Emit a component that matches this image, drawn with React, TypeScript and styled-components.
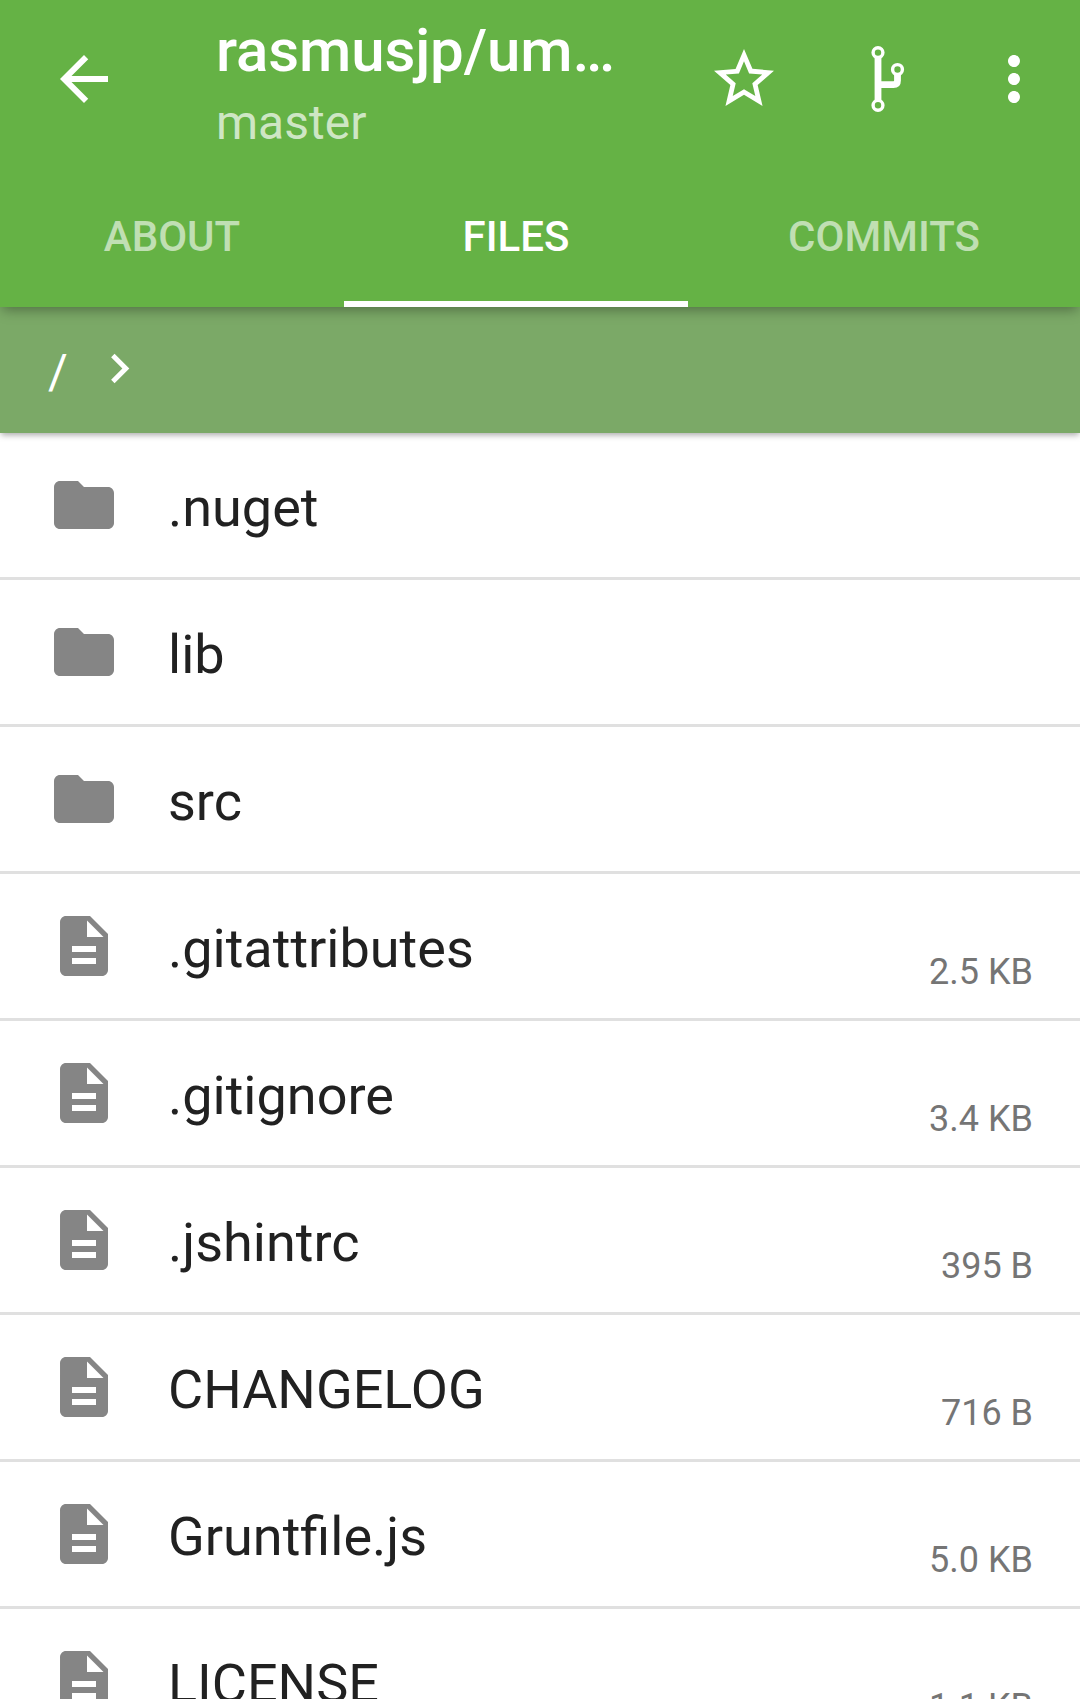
import React from 'react';
import styled, { createGlobalStyle } from 'styled-components';

const GlobalStyle = createGlobalStyle`
  *, *::before, *::after { box-sizing: border-box; }
  html, body { margin: 0; padding: 0; }
  body {
    background: #fff;
    color: #212121;
    font-family: Roboto, 'Noto Sans', sans-serif;
    overflow: hidden;
  }
  button { border: 0; padding: 0; background: none; font: inherit; color: inherit; }
`;

const Screen = styled.div`
  display: flex;
  flex-direction: column;
  width: 1080px;
  height: 1699px;
  overflow: hidden;
  background: #fff;
`;

const AppBar = styled.header`
  position: relative;
  z-index: 2;
  flex: none;
  height: 307px;
  display: flex;
  flex-direction: column;
  background: #65b245;
  color: #fff;
  box-shadow: 0 5px 12px -2px rgba(0, 0, 0, 0.34);
`;

const Toolbar = styled.div`
  display: flex;
  align-items: flex-start;
  height: 163px;
  padding: 0 30px 0 48px;
`;

const IconButton = styled.button<{ $gap?: number }>`
  flex: none;
  width: 72px;
  height: 72px;
  margin-top: 43px;
  margin-left: ${(p) => p.$gap ?? 0}px;
  svg { display: block; }
`;

const Titles = styled.div`
  flex: 1;
  min-width: 0;
  margin-left: 96px;
  padding-top: 15px;
  white-space: nowrap;
`;

const Title = styled.h1`
  margin: 0;
  font-size: 60px;
  line-height: 71px;
  font-weight: 500;
  letter-spacing: -0.12px;
`;

const Subtitle = styled.div`
  margin-top: 8px;
  font-size: 48px;
  line-height: 57px;
  color: rgba(255, 255, 255, 0.7);
`;

const Tabs = styled.nav`
  display: grid;
  grid-template-columns: 344px 344px 392px;
  height: 144px;
`;

const Tab = styled.button<{ $active?: boolean }>`
  padding-top: 3px;
  font-size: 42px;
  font-weight: 500;
  line-height: 49px;
  text-align: center;
  color: ${(p) => (p.$active ? '#fff' : 'rgba(255, 255, 255, 0.6)')};
  box-shadow: ${(p) => (p.$active ? 'inset 0 -6px 0 #fff' : 'none')};
`;

const Breadcrumbs = styled.div`
  position: relative;
  z-index: 1;
  flex: none;
  display: flex;
  align-items: center;
  height: 126px;
  padding-left: 48px;
  background: #7ba967;
  color: #fff;
  font-size: 48px;
  line-height: 57px;
  box-shadow: 0 3px 6px -1px rgba(0, 0, 0, 0.34);
`;

const Crumb = styled.span`
  width: 41.5px;
  padding-top: 3px;
`;

const ChevronSvg = styled.svg`
  display: block;
  margin-top: -3px;
`;

const List = styled.ul`
  margin: 0;
  padding: 0;
  list-style: none;
`;

const Row = styled.li`
  display: flex;
  align-items: center;
  height: 147px;
  padding: 0 47px 0 48px;
  border-bottom: 3px solid #e0e0e0;
`;

const RowIcon = styled.svg`
  flex: none;
  fill: #858585;
`;

const FileName = styled.span`
  flex: 1;
  margin-left: 48px;
  padding-top: 5px;
  font-size: 54px;
  line-height: 63px;
`;

const FileSize = styled.span`
  align-self: flex-end;
  margin-bottom: 25px;
  font-size: 36px;
  line-height: 42px;
  color: #757575;
`;

const FOLDER = 'M10 4H4c-1.1 0-1.99.9-1.99 2L2 18c0 1.1.9 2 2 2h16c1.1 0 2-.9 2-2V8c0-1.1-.9-2-2-2h-8l-2-2z';
const DOCUMENT = 'M14 2H6c-1.1 0-1.99.9-1.99 2L4 20c0 1.1.89 2 1.99 2H18c1.1 0 2-.9 2-2V8l-6-6zm2 16H8v-2h8v2zm0-4H8v-2h8v2zm-3-5V3.5L18.5 9H13z';

type Entry = { name: string; size?: string };

const entries: Entry[] = [
  { name: '.nuget' },
  { name: 'lib' },
  { name: 'src' },
  { name: '.gitattributes', size: '2.5 KB' },
  { name: '.gitignore', size: '3.4 KB' },
  { name: '.jshintrc', size: '395 B' },
  { name: 'CHANGELOG', size: '716 B' },
  { name: 'Gruntfile.js', size: '5.0 KB' },
  { name: 'LICENSE', size: '1.1 KB' },
];

const Glyph = ({ d }: { d: string }) => (
  <svg width="72" height="72" viewBox="0 0 24 24" fill="#fff">
    <path d={d} />
  </svg>
);

const BranchGlyph = () => (
  <svg width="72" height="72" viewBox="0 0 72 72" fill="none" stroke="#fff">
    <path d="M26 15V57M26 41.7H41.5Q45.5 41.7 45.5 37.5V32" strokeWidth="6.8" />
    <g strokeWidth="3.4" fill="#65b245">
      <circle cx="26" cy="9.6" r="4.9" />
      <circle cx="26" cy="62.3" r="4.9" />
      <circle cx="45.5" cy="26.5" r="4.9" />
    </g>
  </svg>
);

export default function App() {
  return (
    <>
      <GlobalStyle />
      <Screen>
        <AppBar>
          <Toolbar>
            <IconButton aria-label="Back">
              <Glyph d="M20 11H7.83l5.59-5.59L12 4l-8 8 8 8 1.41-1.41L7.83 13H20v-2z" />
            </IconButton>
            <Titles>
              <Title>rasmusjp/um…</Title>
              <Subtitle>master</Subtitle>
            </Titles>
            <IconButton aria-label="Star">
              <Glyph d="M22 9.24l-7.19-.62L12 2 9.19 8.63 2 9.24l5.46 4.73L5.82 21 12 17.27 18.18 21l-1.63-7.03L22 9.24zM12 15.4l-3.76 2.27 1-4.28-3.32-2.88 4.38-.38L12 6.1l1.71 4.04 4.38.38-3.32 2.88 1 4.28L12 15.4z" />
            </IconButton>
            <IconButton aria-label="Branch" $gap={72}>
              <BranchGlyph />
            </IconButton>
            <IconButton aria-label="More" $gap={54}>
              <Glyph d="M12 8c1.1 0 2-.9 2-2s-.9-2-2-2-2 .9-2 2 .9 2 2 2zm0 2c-1.1 0-2 .9-2 2s.9 2 2 2 2-.9 2-2-.9-2-2-2zm0 6c-1.1 0-2 .9-2 2s.9 2 2 2 2-.9 2-2-.9-2-2-2z" />
            </IconButton>
          </Toolbar>
          <Tabs>
            <Tab>ABOUT</Tab>
            <Tab $active>FILES</Tab>
            <Tab>COMMITS</Tab>
          </Tabs>
        </AppBar>
        <Breadcrumbs>
          <Crumb>/</Crumb>
          <ChevronSvg width="59" height="59" viewBox="0 0 24 24" fill="#fff">
            <path d="M10 6L8.59 7.41 13.17 12l-4.58 4.59L10 18l6-6z" />
          </ChevronSvg>
        </Breadcrumbs>
        <List>
          {entries.map((e) => (
            <Row key={e.name}>
              <RowIcon width="72" height="72" viewBox="0 0 24 24">
                <path d={e.size ? DOCUMENT : FOLDER} />
              </RowIcon>
              <FileName>{e.name}</FileName>
              {e.size && <FileSize>{e.size}</FileSize>}
            </Row>
          ))}
        </List>
      </Screen>
    </>
  );
}
